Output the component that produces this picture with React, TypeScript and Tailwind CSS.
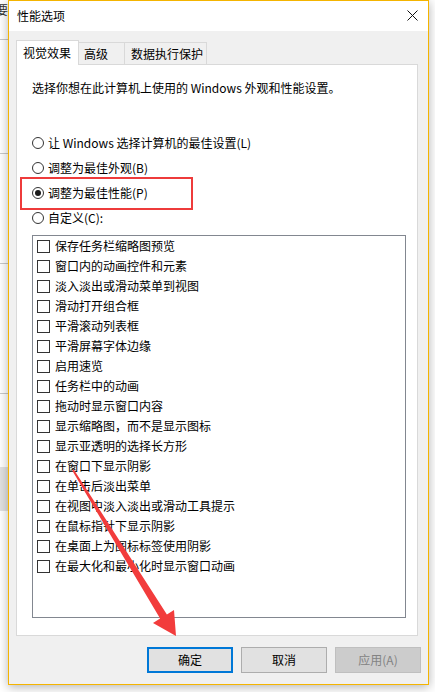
import React from "react";

const options = [
  { label: "让 Windows 选择计算机的最佳设置(L)", checked: false },
  { label: "调整为最佳外观(B)", checked: false },
  { label: "调整为最佳性能(P)", checked: true },
  { label: "自定义(C):", checked: false },
];

const effects = [
  "保存任务栏缩略图预览",
  "窗口内的动画控件和元素",
  "淡入淡出或滑动菜单到视图",
  "滑动打开组合框",
  "平滑滚动列表框",
  "平滑屏幕字体边缘",
  "启用速览",
  "任务栏中的动画",
  "拖动时显示窗口内容",
  "显示缩略图，而不是显示图标",
  "显示亚透明的选择长方形",
  "在窗口下显示阴影",
  "在单击后淡出菜单",
  "在视图中淡入淡出或滑动工具提示",
  "在鼠标指针下显示阴影",
  "在桌面上为图标标签使用阴影",
  "在最大化和最小化时显示窗口动画",
];

function Radio({ checked }: { checked: boolean }) {
  return (
    <span className="flex h-[12px] w-[12px] shrink-0 items-center justify-center rounded-full border border-[#333333] bg-white">
      {checked && <span className="h-[6px] w-[6px] rounded-full bg-[#1a1a1a]" />}
    </span>
  );
}

export default function App() {
  return (
    <div className="relative h-[692px] w-[435px] overflow-hidden bg-white font-['Noto_Sans_CJK_SC','Liberation_Sans',sans-serif] text-[12px] text-black">
      {/* desktop behind the dialog */}
      <span className="absolute left-[-4px] top-[2px] text-[12px] leading-[16px] text-[#333]">要</span>
      <div className="absolute left-0 top-[39px] h-px w-[8px] bg-[#c8c8c8]" />
      <div className="absolute left-0 top-[153px] h-px w-[8px] bg-[#c8c8c8]" />
      <div className="absolute left-0 top-[263px] h-px w-[8px] bg-[#c8c8c8]" />
      <div className="absolute left-0 top-[393px] h-px w-[8px] bg-[#c8c8c8]" />
      <div className="absolute left-0 top-[467px] h-[44px] w-[8px] bg-[#e2e2e2]" />

      {/* dialog window */}
      <div className="relative ml-[8px] flex h-[685px] w-[421px] flex-col border border-[#f4b400] bg-[#f0f0f0] shadow-[0_2px_10px_rgba(0,0,0,0.3)]">
        <div className="flex h-[30px] items-center justify-between bg-white pl-[8px] pr-[10px]">
          <span className="leading-[16px]">性能选项</span>
          <svg width="11" height="11" viewBox="0 0 11 11" className="mb-px">
            <path d="M0.5 0.5 L10.5 10.5 M10.5 0.5 L0.5 10.5" stroke="#111" strokeWidth="1" />
          </svg>
        </div>

        <div className="flex flex-1 flex-col px-[7px] pt-[9px]">
          {/* tabs */}
          <div className="relative z-10 flex h-[24px] items-end">
            <div className="mb-[-1px] flex h-[25px] w-[63px] items-center border border-b-0 border-[#d9d9d9] bg-white pl-[6px] leading-[16px]">
              视觉效果
            </div>
            <div className="flex h-[22px] w-[46px] items-center border-r border-t border-[#d9d9d9] bg-[#f0f0f0] pl-[5px] leading-[16px]">
              高级
            </div>
            <div className="flex h-[22px] w-[82px] items-center border-r border-t border-[#d9d9d9] bg-[#f0f0f0] pl-[6px] leading-[16px]">
              数据执行保护
            </div>
          </div>

          {/* panel */}
          <div className="flex h-[572px] w-[402px] flex-col border border-[#d9d9d9] bg-white pl-[15px] pt-[14px]">
            <div className="h-[18px] leading-[18px]">选择你想在此计算机上使用的 Windows 外观和性能设置。</div>

            <div className="mt-[33px] flex flex-col">
              {options.map((o) => (
                <div key={o.label} className="flex h-[25px] items-center gap-[4px]">
                  <Radio checked={o.checked} />
                  <span className="leading-[16px]">{o.label}</span>
                </div>
              ))}
            </div>

            <div className="mt-[5px] h-[383px] w-[374px] border border-[#828790] bg-white">
              {effects.map((e) => (
                <div key={e} className="flex h-[20px] items-center gap-[5px] pl-[4px]">
                  <span className="h-[13px] w-[13px] shrink-0 border border-[#333333] bg-white" />
                  <span className="leading-[16px]">{e}</span>
                </div>
              ))}
            </div>
          </div>

          {/* buttons */}
          <div className="mt-[11px] flex justify-end gap-[8px]">
            <button className="flex h-[26px] w-[86px] items-center justify-center border-2 border-[#0078d7] bg-[#e1e1e1] leading-[16px]">
              确定
            </button>
            <button className="flex h-[26px] w-[86px] items-center justify-center border border-[#adadad] bg-[#e1e1e1] leading-[16px]">
              取消
            </button>
            <button className="flex h-[26px] w-[86px] items-center justify-center border border-[#bfbfbf] bg-[#cccccc] leading-[16px] text-[#838383]">
              应用(A)
            </button>
          </div>
        </div>
      </div>

      {/* annotation: highlight box */}
      <div className="pointer-events-none absolute left-[20px] top-[177px] h-[33px] w-[173px] border-2 border-[#ee3b3b]" />

      {/* annotation: arrow */}
      <svg className="pointer-events-none absolute left-0 top-0" width="435" height="692" viewBox="0 0 435 692">
        <polygon
          points="72.2,470.5 73.8,469.5 166.9,614.4 174,610 176,636 153,623 160.1,618.6"
          fill="#f23c3c"
        />
      </svg>
    </div>
  );
}
